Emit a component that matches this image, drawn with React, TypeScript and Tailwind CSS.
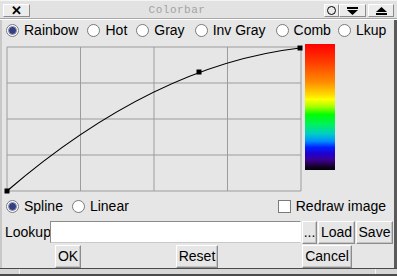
import type { ReactNode } from 'react'

const font = 'font-["Liberation_Sans",Arial,sans-serif]'

function Radio({ checked }: { checked?: boolean }) {
  return (
    <span className="w-[13px] h-[13px] rounded-full border border-[#7a7a7a] bg-white flex items-center justify-center shrink-0">
      {checked && <span className="w-[9px] h-[9px] rounded-full bg-[#34407e] border border-[#8a94c0]" />}
    </span>
  )
}

function Btn({ children, className }: { children: ReactNode; className: string }) {
  return (
    <button
      className={`h-[23px] shrink-0 bg-[#e6e6e6] border border-t-white border-l-white border-r-[#8c8c8c] border-b-[#8c8c8c] shadow-[inset_-1px_-1px_0_#c4c4c4] text-[14px] leading-none text-black flex items-center justify-center ${className}`}
    >
      {children}
    </button>
  )
}

function TitleBtn({ children, className }: { children: ReactNode; className: string }) {
  return (
    <span
      className={`h-[13px] bg-[#ececec] border border-t-white border-l-white border-r-[#8c8c8c] border-b-[#8c8c8c] flex items-center justify-center ${className}`}
    >
      {children}
    </span>
  )
}

const maps = [
  { label: 'Rainbow', checked: true, cls: 'ml-0' },
  { label: 'Hot', cls: 'ml-[9px]' },
  { label: 'Gray', cls: 'ml-[9px]' },
  { label: 'Inv Gray', cls: 'ml-[10px]' },
  { label: 'Comb', cls: 'ml-[10px]' },
  { label: 'Lkup', cls: 'ml-[7px]' },
]

function Graph() {
  const xs = [1, 74.5, 148, 221.5, 295]
  const ys = [1, 37, 73, 109, 145]
  const pts = [
    [1, 145],
    [193, 26],
    [294, 2],
  ]
  return (
    <svg width="296" height="146" className="overflow-visible shrink-0">
      {xs.map(x => (
        <line key={'x' + x} x1={x} y1={1} x2={x} y2={145} stroke="#9c9c9c" strokeWidth="1" />
      ))}
      {ys.map(y => (
        <line key={'y' + y} x1={1} y1={y} x2={295} y2={y} stroke="#9c9c9c" strokeWidth="1" />
      ))}
      <path d="M1 145 Q147.5 19 294 2" fill="none" stroke="#000" strokeWidth="1.2" />
      {pts.map(([x, y]) => (
        <rect key={x} x={x - 2.5} y={y - 2.5} width="5" height="5" fill="#000" />
      ))}
    </svg>
  )
}

export default function App() {
  return (
    <div className={`w-[397px] h-[276px] bg-[#e6e6e6] flex flex-col overflow-hidden text-black ${font}`}>
      {/* title bar */}
      <div className="h-[18px] flex items-start pt-[3px] px-[3px] bg-[#e2e2e2] border-t border-[#f4f4f4]">
        <TitleBtn className="w-[27px]">
          <span className="text-[13px] font-bold leading-none">✕</span>
        </TitleBtn>
        <div className="flex-1 flex justify-center">
          <span className='font-["Liberation_Mono",monospace] text-[11px] leading-[13px] text-[#a2a2a2] tracking-[0.5px]'>
            Colorbar
          </span>
        </div>
        <TitleBtn className="w-[15px]">
          <span className="w-[9px] h-[9px] rounded-full border border-black" />
        </TitleBtn>
        <TitleBtn className="w-[27px]">
          <svg width="11" height="8" viewBox="0 0 11 8">
            <rect x="0" y="0" width="11" height="2" fill="#000" />
            <path d="M0 3 H11 L5.5 8 Z" fill="#000" />
          </svg>
        </TitleBtn>
        <TitleBtn className="w-[26px] ml-[2px]">
          <svg width="11" height="8" viewBox="0 0 11 8">
            <path d="M0 5 L5.5 0 L11 5 Z" fill="#000" />
            <rect x="0" y="6" width="11" height="2" fill="#000" />
          </svg>
        </TitleBtn>
      </div>
      <div className="h-[2px] border-t border-[#a8a8a8] border-b border-b-white" />

      {/* body */}
      <div className="flex-1 flex flex-col border-l-2 border-l-[#c8c8c8] border-r-[3px] border-r-[#5a5a5a]">
        <div className="h-[16px] mt-[2px] flex items-center pl-[4px] text-[14px] leading-[16px] whitespace-nowrap">
          {maps.map(m => (
            <label key={m.label} className={`flex items-center gap-[5px] shrink-0 ${m.cls}`}>
              <Radio checked={m.checked} />
              <span>{m.label}</span>
            </label>
          ))}
        </div>

        <div className="flex items-start mt-[6px] pl-[4px]">
          <div className="mt-[2px]">
            <Graph />
          </div>
          <div className="ml-[3px] w-[30px] h-[126px] bg-[linear-gradient(to_bottom,#ff0000_0%,#ff3a00_14%,#ff8a00_30%,#ffd800_40%,#ffff00_44%,#a0ff00_50%,#00ff00_56%,#00f060_64%,#00d0c0_71%,#0090ff_77%,#0020ff_82%,#2000d0_87%,#3a0090_92%,#200040_96%,#000000_100%)]" />
        </div>

        <div className="h-[16px] mt-[6px] flex items-center pl-[4px] text-[14px] leading-[16px] whitespace-nowrap">
          <label className="flex items-center gap-[5px]">
            <Radio checked />
            <span>Spline</span>
          </label>
          <label className="flex items-center gap-[5px] ml-[9px]">
            <Radio />
            <span>Linear</span>
          </label>
          <label className="flex items-center gap-[5px] ml-auto mr-[8px]">
            <span className="w-[13px] h-[13px] bg-white border border-[#7a7a7a]" />
            <span>Redraw image</span>
          </label>
        </div>

        <div className="h-[22px] mt-[7px] flex items-center pl-[3px] text-[14px]">
          <span className="w-[45px] shrink-0">Lookup</span>
          <div className="w-[251px] shrink-0 h-[22px] bg-white border border-t-[#8c8c8c] border-l-[#8c8c8c] border-r-white border-b-[#c8c8c8]" />
          <Btn className="w-[15px] ml-[1px] text-[11px]">...</Btn>
          <Btn className="w-[37px] ml-[1px]">Load</Btn>
          <Btn className="w-[37px] ml-[1px]">Save</Btn>
        </div>

        <div className="h-[22px] mt-[2px] flex items-center text-[14px]">
          <Btn className="w-[26px] ml-[53px]">OK</Btn>
          <Btn className="w-[42px] ml-[95px]">Reset</Btn>
          <Btn className="w-[50px] ml-[84px]">Cancel</Btn>
        </div>
      </div>

      {/* bottom frame */}
      <div className="h-[8px] flex border-t border-[#4a4a4a] bg-[#d6d6d6] border-b-2 border-b-[#4a4a4a]">
        <span className="w-[20px] border-r border-[#f4f4f4]" />
        <span className="flex-1" />
        <span className="w-[22px] border-l border-[#f4f4f4]" />
      </div>
    </div>
  )
}
